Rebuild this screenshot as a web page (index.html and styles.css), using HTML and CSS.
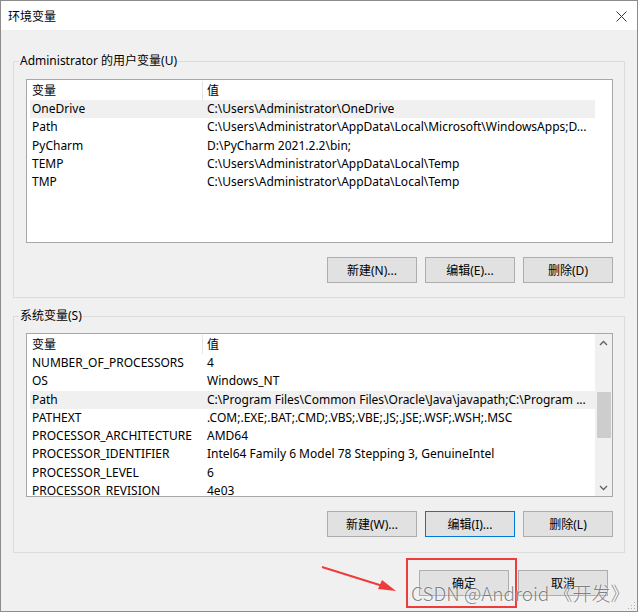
FILE: index.html
```html
<!DOCTYPE html>
<html lang="zh-CN">
<head>
<meta charset="utf-8">
<title>环境变量</title>
<link rel="stylesheet" href="styles.css">
</head>
<body>
<div class="window">
  <div class="titlebar">
    <span class="title">环境变量</span>
    <svg class="close" width="11" height="11" viewBox="0 0 11 11"><path d="M0.5 0.5 L10.5 10.5 M10.5 0.5 L0.5 10.5" stroke="#333" stroke-width="1" fill="none"/></svg>
  </div>
  <div class="content">
    <fieldset class="group">
      <legend>Administrator 的用户变量(U)</legend>
      <div class="list list-user">
        <div class="rows">
          <div class="row head"><span class="c1">变量</span><span class="c2">值</span></div>
          <div class="row sel"><span class="c1">OneDrive</span><span class="c2">C:\Users\Administrator\OneDrive</span></div>
          <div class="row"><span class="c1">Path</span><span class="c2">C:\Users\Administrator\AppData\Local\Microsoft\WindowsApps;D...</span></div>
          <div class="row"><span class="c1">PyCharm</span><span class="c2">D:\PyCharm 2021.2.2\bin;</span></div>
          <div class="row"><span class="c1">TEMP</span><span class="c2">C:\Users\Administrator\AppData\Local\Temp</span></div>
          <div class="row"><span class="c1">TMP</span><span class="c2">C:\Users\Administrator\AppData\Local\Temp</span></div>
        </div>
        <div class="noscroll"></div>
      </div>
      <div class="btns">
        <button class="btn">新建(N)...</button>
        <button class="btn">编辑(E)...</button>
        <button class="btn">删除(D)</button>
      </div>
    </fieldset>

    <fieldset class="group group-sys">
      <legend>系统变量(S)</legend>
      <div class="list list-sys">
        <div class="rows">
          <div class="row head"><span class="c1">变量</span><span class="c2">值</span></div>
          <div class="row"><span class="c1">NUMBER_OF_PROCESSORS</span><span class="c2">4</span></div>
          <div class="row"><span class="c1">OS</span><span class="c2">Windows_NT</span></div>
          <div class="row sel"><span class="c1">Path</span><span class="c2">C:\Program Files\Common Files\Oracle\Java\javapath;C:\Program ...</span></div>
          <div class="row"><span class="c1">PATHEXT</span><span class="c2">.COM;.EXE;.BAT;.CMD;.VBS;.VBE;.JS;.JSE;.WSF;.WSH;.MSC</span></div>
          <div class="row"><span class="c1">PROCESSOR_ARCHITECTURE</span><span class="c2">AMD64</span></div>
          <div class="row"><span class="c1">PROCESSOR_IDENTIFIER</span><span class="c2">Intel64 Family 6 Model 78 Stepping 3, GenuineIntel</span></div>
          <div class="row"><span class="c1">PROCESSOR_LEVEL</span><span class="c2">6</span></div>
          <div class="row"><span class="c1">PROCESSOR_REVISION</span><span class="c2">4e03</span></div>
        </div>
        <div class="scrollbar">
          <div class="arrow">
            <svg width="9" height="6" viewBox="0 0 9 6"><path d="M1 5 L4.5 1.5 L8 5" stroke="#606060" stroke-width="1.3" fill="none"/></svg>
          </div>
          <div class="track"><div class="thumb"></div></div>
          <div class="arrow">
            <svg width="9" height="6" viewBox="0 0 9 6"><path d="M1 1 L4.5 4.5 L8 1" stroke="#606060" stroke-width="1.3" fill="none"/></svg>
          </div>
        </div>
      </div>
      <div class="btns">
        <button class="btn">新建(W)...</button>
        <button class="btn focus">编辑(I)...</button>
        <button class="btn">删除(L)</button>
      </div>
    </fieldset>

    <div class="footer">
      <button class="btn">确定</button>
      <button class="btn">取消</button>
    </div>
  </div>

  <div class="redbox"></div>
  <svg class="redarrow" width="90" height="40" viewBox="0 0 90 40">
    <path d="M6 7 L70 27" stroke="#ef3b3b" stroke-width="2" fill="none"/>
    <path d="M80 31 L62 29 L66 20 Z" fill="#ef3b3b"/>
  </svg>
  <div class="watermark">CSDN @Android 《开发》</div>
  <svg class="grip" width="8" height="8" viewBox="0 0 8 8">
    <rect x="6" y="0" width="1" height="1" fill="#b0b0b0"/>
    <rect x="3" y="3" width="1" height="1" fill="#b0b0b0"/>
    <rect x="6" y="3" width="1" height="1" fill="#b0b0b0"/>
    <rect x="0" y="6" width="1" height="1" fill="#b0b0b0"/>
    <rect x="3" y="6" width="1" height="1" fill="#b0b0b0"/>
    <rect x="6" y="6" width="1" height="1" fill="#b0b0b0"/>
  </svg>
</div>
</body>
</html>
```

FILE: styles.css
```css
html, body {
  margin: 0;
  padding: 0;
  background: #f0f0f0;
}

.window {
  position: relative;
  width: 638px;
  height: 612px;
  box-sizing: border-box;
  border: 1px solid #8c8c8c;
  background: #f0f0f0;
  display: flex;
  flex-direction: column;
  overflow: hidden;
  font-family: "Noto Sans", "Noto Sans CJK SC", sans-serif;
  font-size: 12px;
  color: #000;
}

.titlebar {
  height: 29px;
  flex: none;
  background: #fff;
  display: flex;
  align-items: center;
  justify-content: space-between;
  padding: 0 10px 0 7px;
}

.title {
  font-family: "Noto Sans CJK SC", sans-serif;
  font-size: 12px;
  line-height: 16px;
}

.close {
  display: block;
  margin-top: 1px;
}

.content {
  flex: 1;
  display: flex;
  flex-direction: column;
  padding: 23px 12px 0 12px;
}

.group {
  margin: 0;
  border: 1px solid #dcdcdc;
  padding: 10px 11px 14px 12px;
  min-width: 0;
}

.group-sys {
  margin-top: 10px;
  padding-top: 9px;
  padding-bottom: 15px;
}

.group legend {
  padding: 0 1px;
  margin-left: -7px;
  line-height: 16px;
  font-family: "Noto Sans", "Noto Sans CJK SC", sans-serif;
}

.list {
  height: 164px;
  box-sizing: border-box;
  border: 1px solid #a8a8a8;
  background: #fff;
  display: flex;
  overflow: hidden;
}

.rows {
  flex: 1;
  min-width: 0;
  padding-left: 3px;
  padding-top: 1px;
  overflow: hidden;
}

.noscroll,
.scrollbar {
  width: 17px;
  flex: none;
}

.scrollbar {
  background: #f0f0f0;
  display: flex;
  flex-direction: column;
}

.arrow {
  height: 17px;
  flex: none;
  display: flex;
  align-items: center;
  justify-content: center;
}

.track {
  flex: 1;
  padding: 41px 1px 0 2px;
}

.thumb {
  height: 46px;
  background: #cdcdcd;
}

.row {
  display: grid;
  grid-template-columns: 172px 1fr;
  height: 18.3px;
  line-height: 18.3px;
  white-space: nowrap;
}

.row .c1 {
  padding-left: 2px;
  overflow: hidden;
}

.row .c2 {
  padding-left: 5px;
  overflow: hidden;
}

.row.head {
  height: 19px;
  line-height: 19px;
}

.row.head .c2 {
  border-left: 1px solid #e5e5e5;
  padding-left: 4px;
}

.row.sel {
  background: #f0f0f0;
}

.btns {
  display: flex;
  justify-content: flex-end;
  gap: 8px;
  margin-top: 14px;
}

.btn {
  width: 90px;
  height: 26px;
  box-sizing: border-box;
  border: 1px solid #adadad;
  background: #e1e1e1;
  font-family: "Noto Sans", "Noto Sans CJK SC", sans-serif;
  font-size: 12px;
  color: #000;
  padding: 0;
  margin: 0;
}

.btn.focus {
  border-color: #0078d7;
}

.footer {
  display: flex;
  justify-content: flex-end;
  gap: 9px;
  margin-top: 17px;
  padding-right: 17px;
}

.redbox {
  position: absolute;
  left: 405px;
  top: 557px;
  width: 111px;
  height: 50px;
  box-sizing: border-box;
  border: 2px solid #ec3c3c;
}

.redarrow {
  position: absolute;
  left: 315px;
  top: 559px;
}

.watermark {
  position: absolute;
  left: 410px;
  top: 579px;
  font-family: "Noto Sans CJK SC", sans-serif;
  font-weight: 300;
  font-size: 19px;
  line-height: 26px;
  white-space: nowrap;
  color: rgba(90, 90, 90, 0.75);
  text-shadow: 0 0 2px rgba(255, 255, 255, 0.9);
}

.grip {
  position: absolute;
  right: 1px;
  bottom: 1px;
}
```
